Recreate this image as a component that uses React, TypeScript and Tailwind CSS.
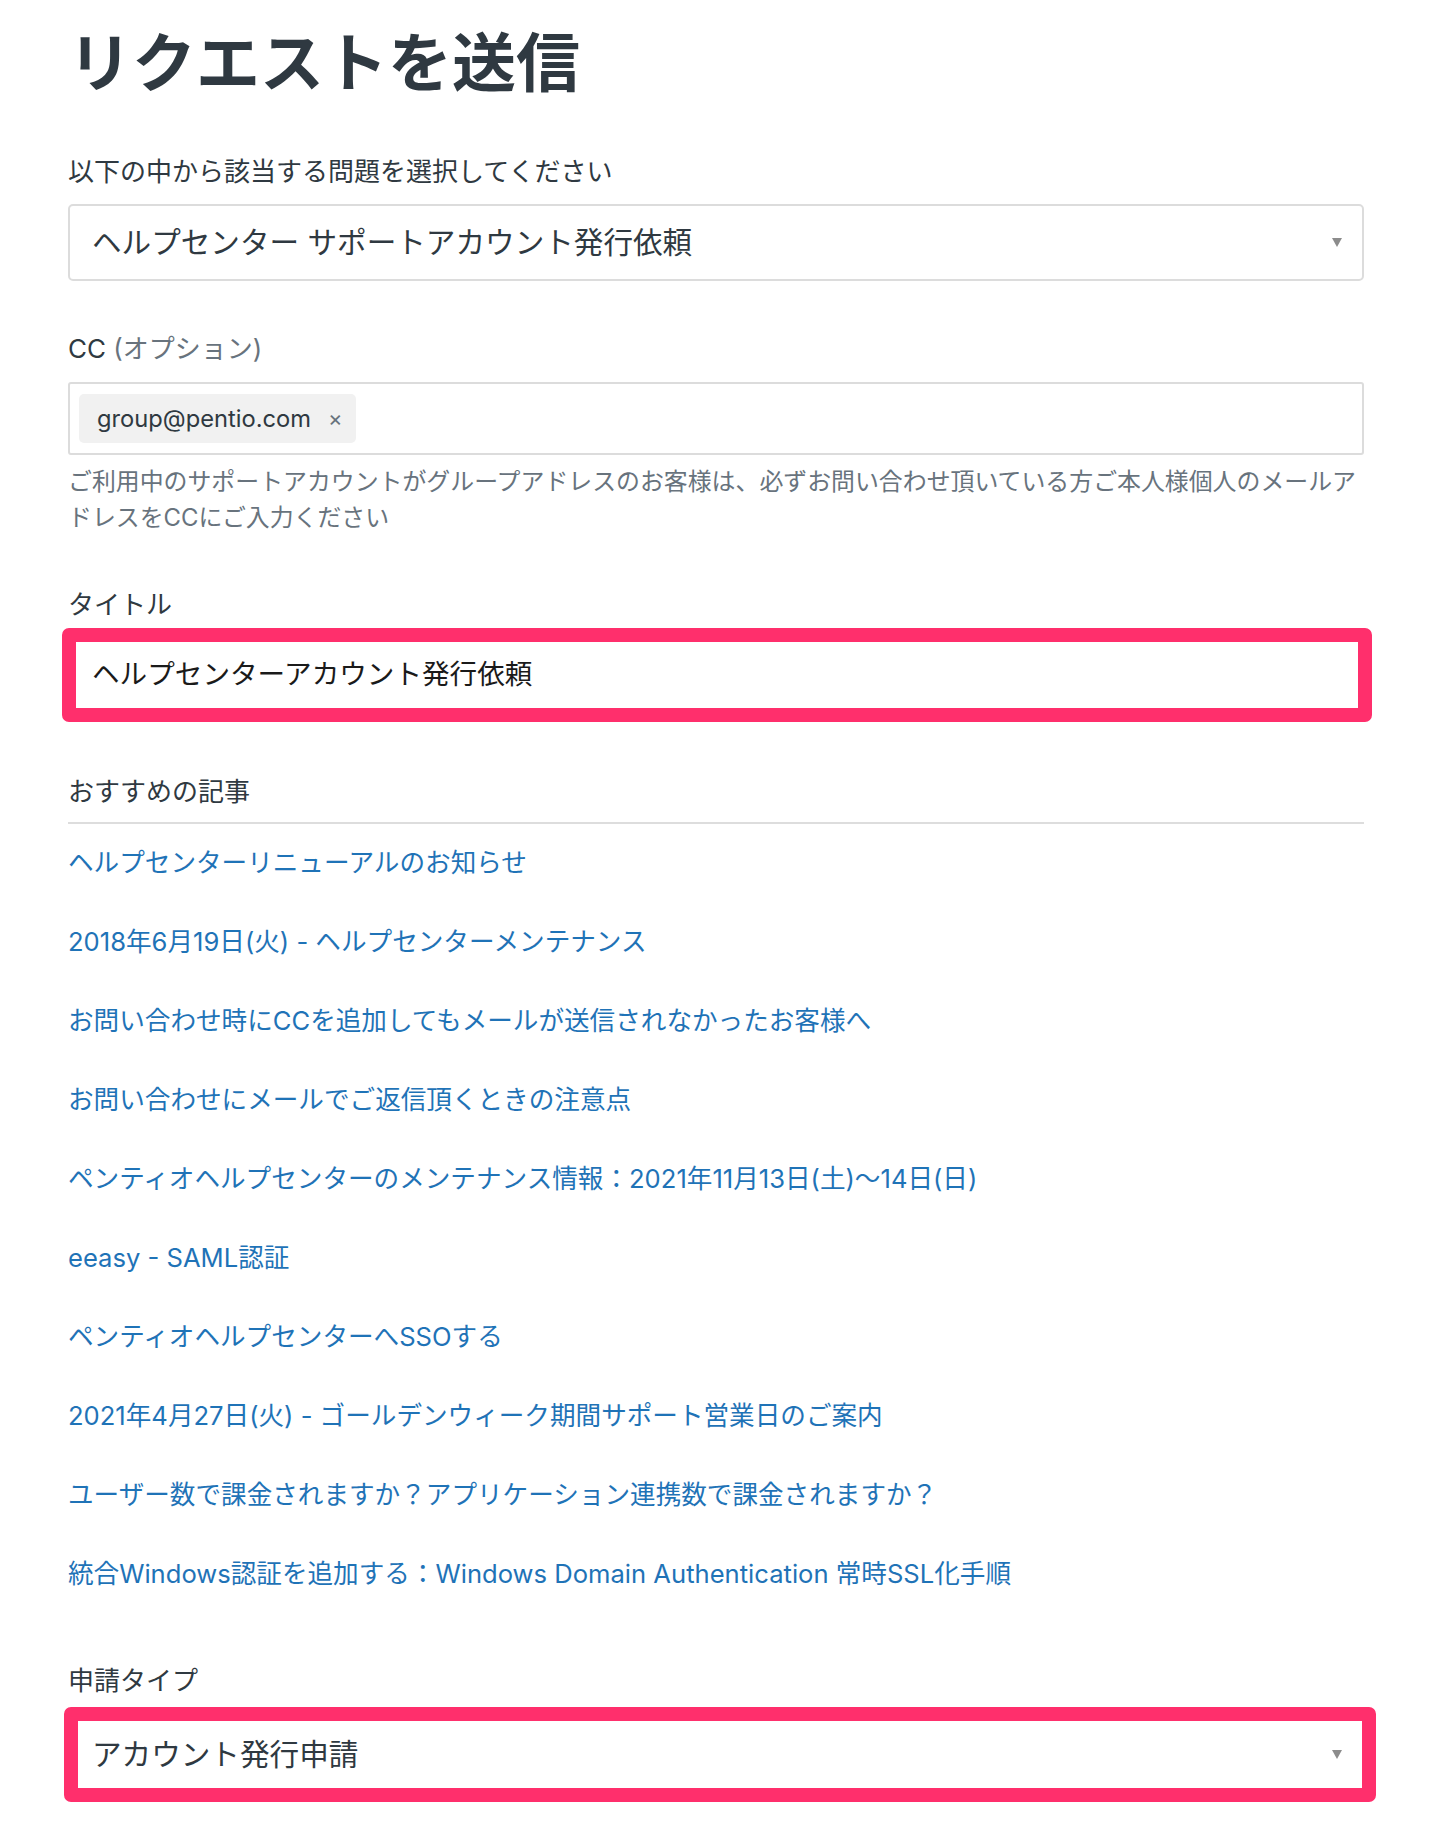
import React from 'react';

const articles = [
    'ヘルプセンターリニューアルのお知らせ',
    '2018年6月19日(火) - ヘルプセンターメンテナンス',
    'お問い合わせ時にCCを追加してもメールが送信されなかったお客様へ',
    'お問い合わせにメールでご返信頂くときの注意点',
    'ペンティオヘルプセンターのメンテナンス情報：2021年11月13日(土)〜14日(日)',
    'eeasy - SAML認証',
    'ペンティオヘルプセンターへSSOする',
    '2021年4月27日(火) - ゴールデンウィーク期間サポート営業日のご案内',
    'ユーザー数で課金されますか？アプリケーション連携数で課金されますか？',
    '統合Windows認証を追加する：Windows Domain Authentication 常時SSL化手順',
];

function Caret() {
    return (
        <svg width="10" height="11" viewBox="0 0 10 11" className="shrink-0">
            <path d="M0 1 L10 1 L5 10 Z" fill="#8c8c8c" />
        </svg>
    );
}

export default function App() {
    return (
        <div
            className="min-h-screen bg-white px-[68px] text-[#2f3941]"
            style={{ fontFamily: 'Inter, "Noto Sans CJK JP", sans-serif' }}
        >
            <h1 className="pt-[23px] text-[64px] leading-[80px] font-bold text-[#2f3941]">
                リクエストを送信
            </h1>

            {/* 問題の選択 */}
            <label className="mt-[51px] block text-[26px] leading-[36px]">
                以下の中から該当する問題を選択してください
            </label>
            <div className="mt-[14px] flex h-[77px] items-center justify-between rounded-[5px] border-2 border-[#dcdcdc] pl-[22px] pr-[20px]">
                <span className="text-[29.6px] text-[#2f3941]">ヘルプセンター サポートアカウント発行依頼</span>
                <Caret />
            </div>

            {/* CC */}
            <label className="mt-[50px] block text-[26px] leading-[36px]">
                CC <span className="text-[#68737d]">(オプション)</span>
            </label>
            <div className="mt-[15px] flex h-[73px] items-center rounded-[3px] border-2 border-[#dcdcdc] pl-[9px]">
                <div className="flex h-[49px] items-center rounded-[5px] bg-[#f1f1f1] pl-[18px] pr-[13px]">
                    <span className="text-[23.7px] text-[#2f3941]">group@pentio.com</span>
                    <span className="ml-[17px] text-[22px] text-[#68737d]">×</span>
                </div>
            </div>
            <p className="mt-[9px] text-[23.9px] leading-[36px] text-[#68737d]">
                ご利用中のサポートアカウントがグループアドレスのお客様は、必ずお問い合わせ頂いている方ご本人様個人のメールアドレスをCCにご入力ください
            </p>

            {/* タイトル */}
            <label className="mt-[51px] block text-[26px] leading-[36px]">タイトル</label>
            <div className="mt-[5px] ml-[-6px] mr-[-8px] flex h-[94px] items-center rounded-[7px] border-[14px] border-[#ff2f6c] pl-[16px]">
                <span className="text-[27.6px] text-[#1a1a1a]">ヘルプセンターアカウント発行依頼</span>
            </div>

            {/* おすすめの記事 */}
            <div className="mt-[52px] border-b-2 border-[#dddddd] pb-[12px] text-[26px] leading-[36px]">
                おすすめの記事
            </div>
            <ul className="mt-[21px] flex flex-col gap-[43px]">
                {articles.map((a) => (
                    <li key={a} className="text-[25.6px] leading-[36px] text-[#1f73b7]">
                        {a}
                    </li>
                ))}
            </ul>

            {/* 申請タイプ */}
            <label className="mt-[71px] block text-[26px] leading-[36px]">申請タイプ</label>
            <div className="mt-[8px] ml-[-4px] mr-[-12px] flex h-[95px] items-center justify-between rounded-[7px] border-[14px] border-[#ff2f6c] pl-[14px] pr-[20px]">
                <span className="text-[29.6px] text-[#2f3941]">アカウント発行申請</span>
                <Caret />
            </div>
        </div>
    );
}
